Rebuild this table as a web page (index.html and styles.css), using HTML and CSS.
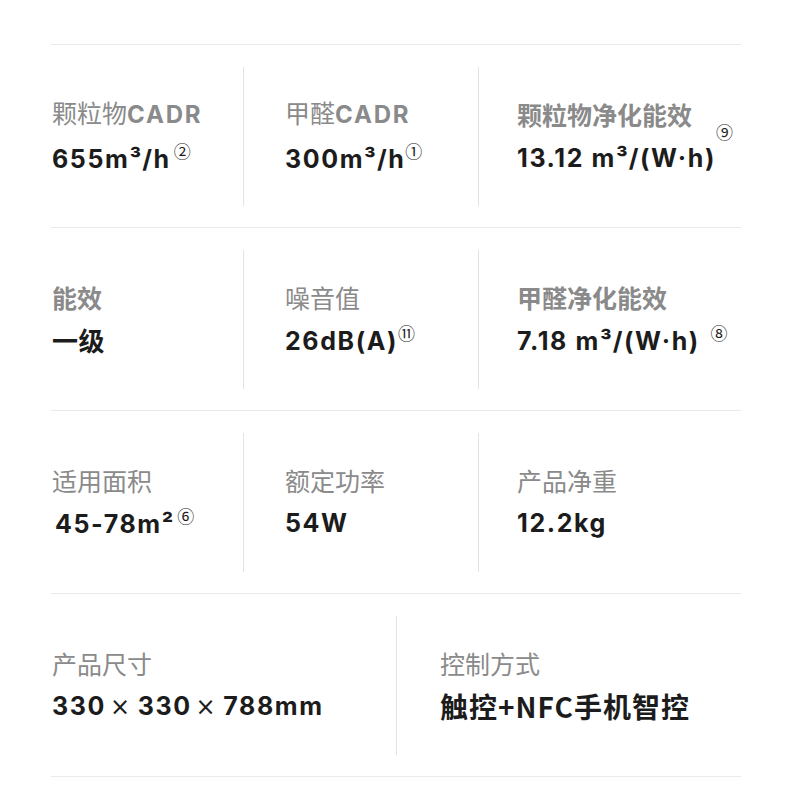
FILE: index.html
```html
<!DOCTYPE html>
<html lang="zh-CN">
<head>
<meta charset="utf-8">
<title>参数</title>
<link rel="stylesheet" href="styles.css">
</head>
<body>
<div class="specs">
  <div class="row three">
    <div class="cell first">
      <div class="label">颗粒物<span class="lat">CADR</span></div>
      <div class="value">655m<span class="sup">³</span>/h<span class="note">②</span></div>
    </div>
    <div class="cell">
      <div class="label">甲醛<span class="lat">CADR</span></div>
      <div class="value">300m<span class="sup">³</span>/h<span class="note tight">①</span></div>
    </div>
    <div class="cell">
      <div class="label strong">颗粒物净化能效</div>
      <div class="value">13.12 m<span class="sup">³</span>/(W·h)<span class="note high">⑨</span></div>
    </div>
  </div>
  <div class="row three">
    <div class="cell first">
      <div class="label strong">能效</div>
      <div class="value cjk">一级</div>
    </div>
    <div class="cell">
      <div class="label">噪音值</div>
      <div class="value">26dB(A)<span class="note tight">⑪</span></div>
    </div>
    <div class="cell">
      <div class="label strong">甲醛净化能效</div>
      <div class="value">7.18 m<span class="sup">³</span>/(W·h) <span class="note">⑧</span></div>
    </div>
  </div>
  <div class="row three">
    <div class="cell first">
      <div class="label">适用面积</div>
      <div class="value shift">45-78m<span class="sup">²</span><span class="note">⑥</span></div>
    </div>
    <div class="cell">
      <div class="label">额定功率</div>
      <div class="value">54W</div>
    </div>
    <div class="cell">
      <div class="label">产品净重</div>
      <div class="value">12.2kg</div>
    </div>
  </div>
  <div class="row two last">
    <div class="cell first">
      <div class="label">产品尺寸</div>
      <div class="value">330<span class="x">×</span>330<span class="x">×</span>788mm</div>
    </div>
    <div class="cell">
      <div class="label">控制方式</div>
      <div class="value cjk big">触控+NFC手机智控</div>
    </div>
  </div>
</div>
</body>
</html>
```
FILE: styles.css
```css
html, body {
  margin: 0;
  padding: 0;
  background: #ffffff;
}

body {
  font-family: "Noto Sans CJK SC", "Noto Sans", sans-serif;
}

.specs {
  margin: 44px 0 0 51px;
  width: 690px;
}

.row {
  display: grid;
  height: 183px;
  box-sizing: border-box;
  border-top: 1px solid #ebebeb;
}

.row.last {
  border-bottom: 1px solid #ebebeb;
  height: 184px;
}

.row.three {
  grid-template-columns: 192px 235px 1fr;
}

.row.two {
  grid-template-columns: 345px 1fr;
}

.cell {
  margin: 22px 0 21px;
  border-left: 1px solid #e3e3e3;
  padding-left: 41px;
  display: flex;
  flex-direction: column;
  justify-content: center;
  gap: 11px;
  padding-bottom: 2px;
}

.row.three .cell:nth-child(3) {
  padding-left: 38px;
}

.row.two .cell:nth-child(2) {
  padding-left: 43px;
}

.cell.first {
  border-left: none;
  padding-left: 1px;
}

.label {
  font-family: "Noto Sans CJK SC", sans-serif;
  font-size: 25px;
  line-height: 32px;
  color: #8a8a8a;
  font-weight: 400;
  white-space: nowrap;
}

.label.strong {
  font-weight: 700;
}

.label .lat {
  font-family: "Inter", "Noto Sans", sans-serif;
  font-weight: 700;
  font-size: 24px;
  letter-spacing: 1.8px;
}

.value {
  font-family: "Inter", "Noto Sans CJK SC", sans-serif;
  font-size: 25px;
  line-height: 32px;
  font-weight: 700;
  color: #1c1c1c;
  letter-spacing: 1.6px;
  white-space: nowrap;
}

.sup {
  letter-spacing: 0;
  margin-right: 1px;
}

.value.cjk {
  font-family: "Noto Sans CJK SC", sans-serif;
  font-size: 26px;
  font-weight: 700;
  letter-spacing: 0.5px;
}

.value.cjk.big {
  font-size: 28px;
  letter-spacing: 1px;
}

.value.shift {
  padding-left: 3px;
}

.x {
  font-family: "DejaVu Sans", sans-serif;
  font-weight: 400;
  font-size: 24px;
  margin: 0 6px 0 4px;
}

.note {
  font-family: "Noto Sans CJK SC", "DejaVu Sans", sans-serif;
  font-size: 17px;
  font-weight: 400;
  vertical-align: 10px;
  margin-left: 3px;
  letter-spacing: 0;
  line-height: 1;
}

.note.tight {
  margin-left: 0;
}

.note.high {
  position: relative;
  top: -18px;
  margin-left: 0;
}
```
